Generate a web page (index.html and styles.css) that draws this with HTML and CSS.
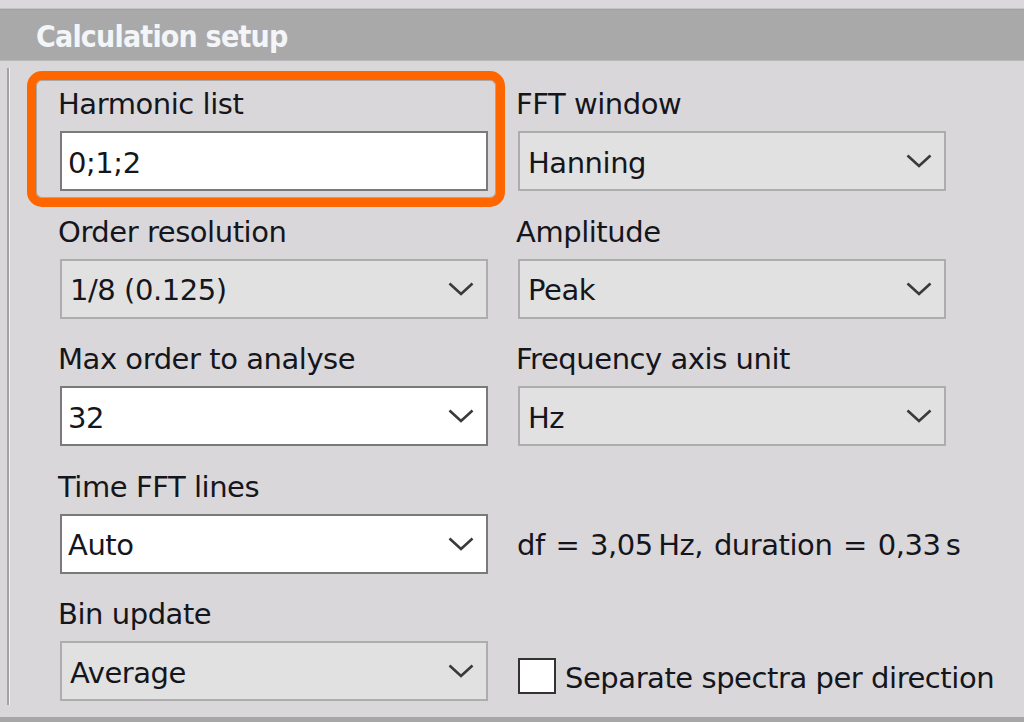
FILE: index.html
```html
<!DOCTYPE html>
<html>
<head>
<meta charset="utf-8">
<link rel="stylesheet" href="styles.css">
</head>
<body>
<div class="top-strip"></div>
<div class="header"><span class="title">Calculation setup</span></div>
<div class="frame">
  <div class="grid">
    <div class="field highlighted">
      <div class="label">Harmonic list</div>
      <div class="box input"><span class="value">0;1;2</span></div>
    </div>
    <div class="field">
      <div class="label">FFT window</div>
      <div class="box combo"><span class="value">Hanning</span><svg class="chev" width="26" height="14" viewBox="0 0 26 14"><polyline points="1.5,1.5 13,12 24.5,1.5"/></svg></div>
    </div>
    <div class="field">
      <div class="label">Order resolution</div>
      <div class="box combo"><span class="value">1/8 (0.125)</span><svg class="chev" width="26" height="14" viewBox="0 0 26 14"><polyline points="1.5,1.5 13,12 24.5,1.5"/></svg></div>
    </div>
    <div class="field">
      <div class="label">Amplitude</div>
      <div class="box combo"><span class="value">Peak</span><svg class="chev" width="26" height="14" viewBox="0 0 26 14"><polyline points="1.5,1.5 13,12 24.5,1.5"/></svg></div>
    </div>
    <div class="field">
      <div class="label">Max order to analyse</div>
      <div class="box editcombo"><span class="value">32</span><svg class="chev" width="26" height="14" viewBox="0 0 26 14"><polyline points="1.5,1.5 13,12 24.5,1.5"/></svg></div>
    </div>
    <div class="field">
      <div class="label">Frequency axis unit</div>
      <div class="box combo"><span class="value">Hz</span><svg class="chev" width="26" height="14" viewBox="0 0 26 14"><polyline points="1.5,1.5 13,12 24.5,1.5"/></svg></div>
    </div>
    <div class="field">
      <div class="label">Time FFT lines</div>
      <div class="box editcombo"><span class="value">Auto</span><svg class="chev" width="26" height="14" viewBox="0 0 26 14"><polyline points="1.5,1.5 13,12 24.5,1.5"/></svg></div>
    </div>
    <div class="field">
      <div class="note">df = 3,05&#8201;Hz, duration = 0,33&#8201;s</div>
    </div>
    <div class="field">
      <div class="label">Bin update</div>
      <div class="box combo"><span class="value">Average</span><svg class="chev" width="26" height="14" viewBox="0 0 26 14"><polyline points="1.5,1.5 13,12 24.5,1.5"/></svg></div>
    </div>
    <div class="field bottom">
      <label class="check"><span class="checkbox"></span><span class="check-text">Separate spectra per direction</span></label>
    </div>
  </div>
</div>
<div class="bottom-band"></div>
</body>
</html>
```

FILE: styles.css
```css
html, body {
  margin: 0;
  padding: 0;
}
body {
  width: 1024px;
  height: 722px;
  overflow: hidden;
  background: #d9d7da;
  font-family: "DejaVu Sans", Verdana, sans-serif;
  font-size: 29px;
  letter-spacing: -0.45px;
  color: #15151c;
}
.top-strip {
  height: 8px;
  background: #dad8db;
  border-bottom: 1px solid #c4c3c5;
}
.header {
  background: #a9a9a9;
  border-top: 1px solid #a2a2a2;
  border-bottom: 1px solid #b9b9b9;
  display: flex;
  align-items: center;
  padding-left: 36px;
  padding-top: 3px;
  box-sizing: border-box;
  height: 52px;
}
.title {
  font-family: "DejaVu Sans Condensed", "DejaVu Sans", sans-serif;
  font-weight: bold;
  font-size: 30px;
  letter-spacing: -0.8px;
  color: #f3f5f8;
  line-height: 34px;
}
.frame {
  margin: 7px 0 0 7px;
  height: 637px;
  box-sizing: border-box;
  border-left: 2px solid #a3a3a3;
  box-shadow: inset 1px 0 0 #f2f2f2;
  padding: 19px 0 0 51px;
}
.grid {
  display: grid;
  grid-template-columns: 428px 428px;
  column-gap: 30px;
  row-gap: 23.5px;
}
.field {
  position: relative;
  display: flex;
  flex-direction: column;
}
.label {
  line-height: 34px;
  height: 34px;
  margin-left: -2px;
  margin-bottom: 10px;
  white-space: nowrap;
}
.box {
  height: 60px;
  box-sizing: border-box;
  border: 2px solid #adadad;
  background: #e1e1e1;
  display: flex;
  align-items: center;
  padding: 3px 12px 0 8px;
  line-height: 34px;
}
.box .value {
  flex: 1;
  white-space: nowrap;
}
.input, .editcombo {
  background: #ffffff;
  border-color: #7a7a7a;
  padding-left: 6px;
}
.chev {
  flex: none;
  margin-top: -3px;
}
.chev polyline {
  fill: none;
  stroke: #3a3a3a;
  stroke-width: 2.6;
}
.highlighted::after {
  content: "";
  position: absolute;
  top: -16px;
  left: -33px;
  right: -17px;
  bottom: -16px;
  border: 9px solid #ff6600;
  border-radius: 15px;
  box-shadow: inset 0 0 0 1px #a9a9a9;
  pointer-events: none;
}
.note {
  margin-top: 44px;
  height: 60px;
  display: flex;
  align-items: center;
  padding-top: 3px;
  box-sizing: border-box;
  margin-left: -1px;
  line-height: 34px;
  white-space: nowrap;
  word-spacing: 2px;
}
.bottom {
  justify-content: flex-end;
}
.check {
  display: flex;
  align-items: center;
  margin-bottom: 6px;
  white-space: nowrap;
}
.checkbox {
  width: 38px;
  height: 36px;
  box-sizing: border-box;
  border: 2px solid #333333;
  background: #ffffff;
  margin-right: 9px;
  flex: none;
}
.check-text {
  line-height: 34px;
  padding-top: 4px;
}
.bottom-band {
  margin-top: 12px;
  height: 10px;
  background: #a6a6a6;
}
```
